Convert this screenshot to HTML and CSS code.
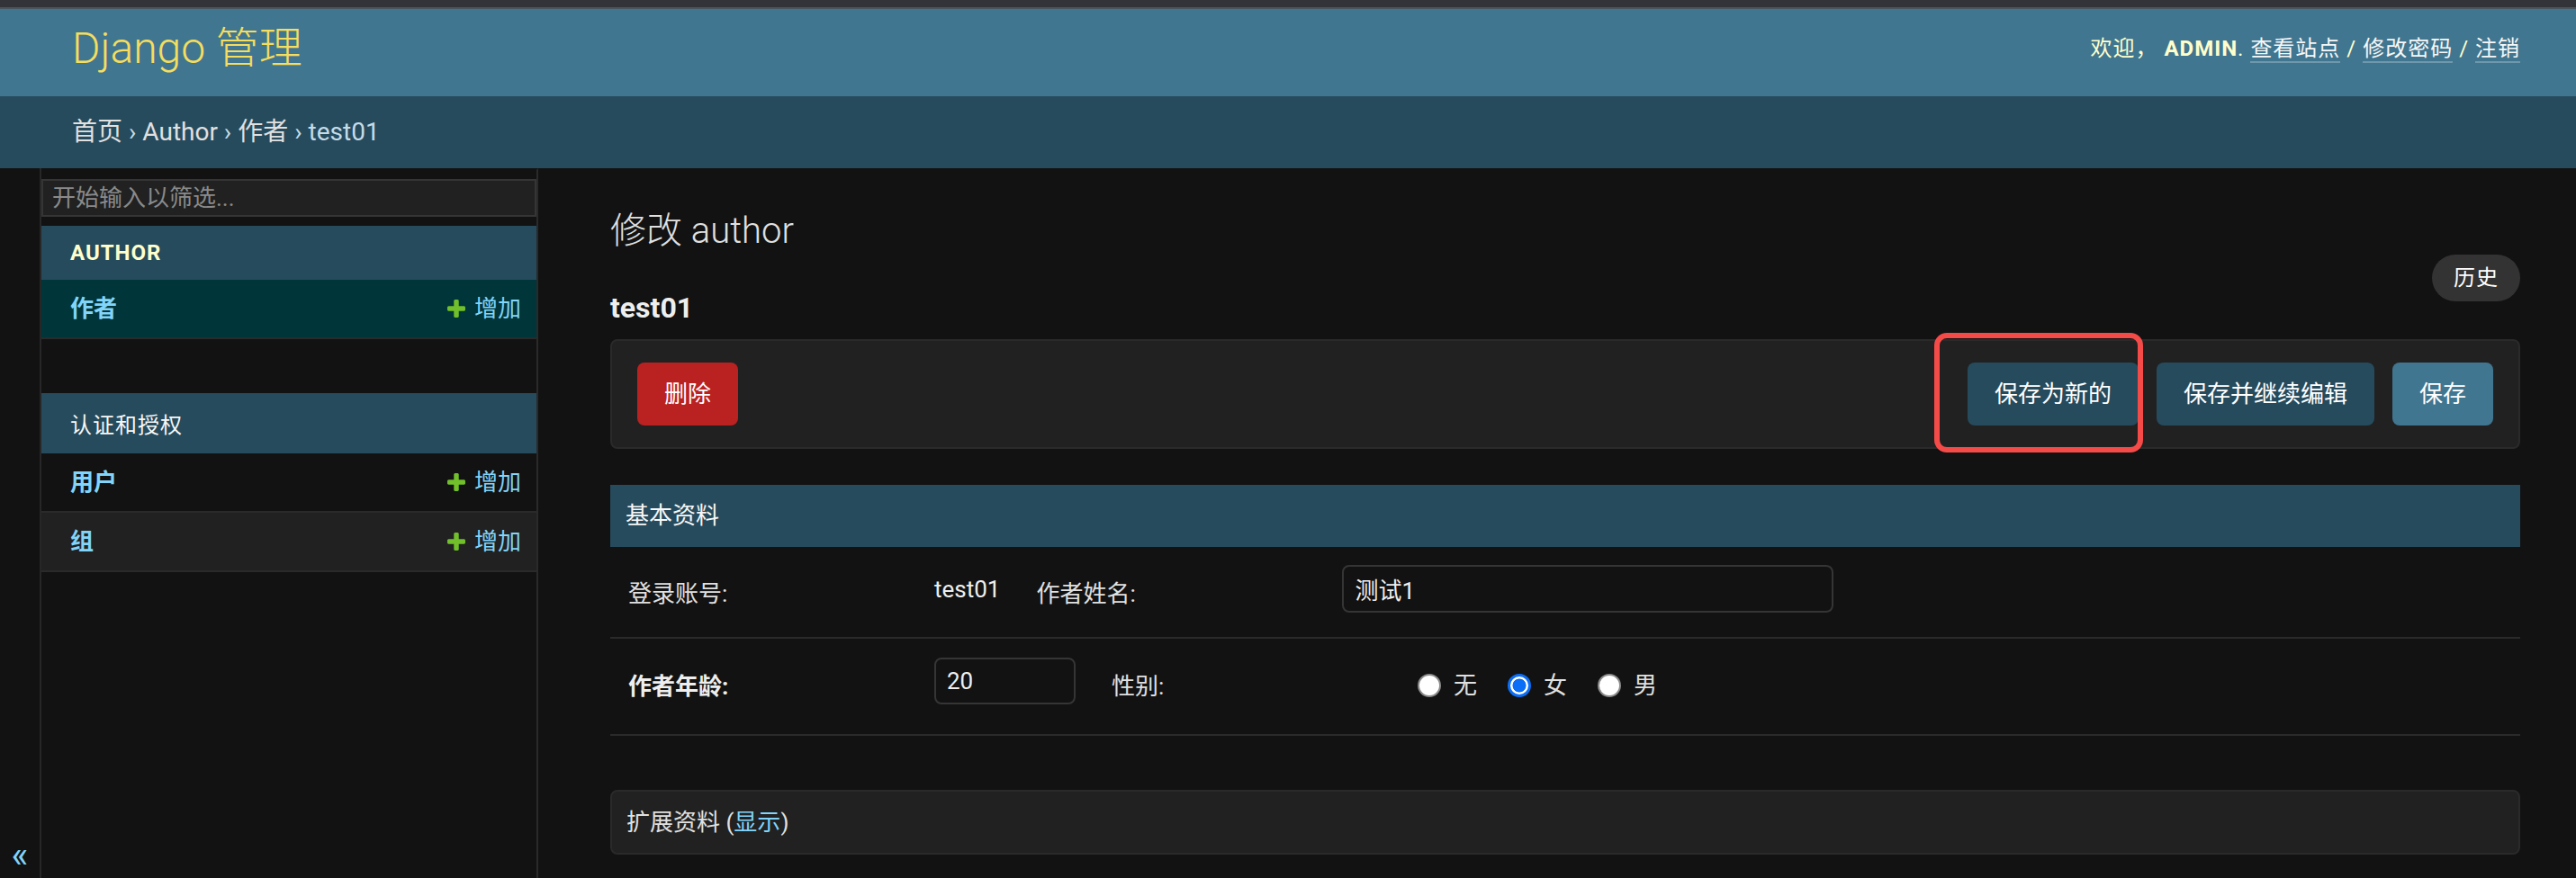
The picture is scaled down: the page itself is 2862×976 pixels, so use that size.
FILE: index.html
```html
<!DOCTYPE html>
<html lang="zh-Hans">
<head>
  <meta charset="UTF-8">
  <meta name="viewport" content="width=device-width, initial-scale=1.0">
  <title>修改 author | Django 站点管理员</title>
  <link rel="stylesheet" href="styles.css">
</head>
<body>
  <div class="window-edge"></div>

  <header class="header">
    <div class="branding"><a href="#">Django 管理</a></div>
    <div class="user-tools">
      欢迎， <strong>admin</strong>. <a href="#">查看站点</a> / <a href="#">修改密码</a> / <a href="#">注销</a>
    </div>
  </header>

  <nav class="breadcrumbs">
    <a href="#">首页</a> › <a href="#">Author</a> › <a href="#">作者</a> › test01
  </nav>

  <div class="main">
    <div class="toggle-nav"><span>«</span></div>

    <aside class="sidebar">
      <input type="search" class="nav-filter" placeholder="开始输入以筛选...">

      <div class="app-module current-app">
        <div class="app-caption"><a href="#">Author</a></div>
        <div class="model-row current-model">
          <a class="model-link" href="#">作者</a>
          <a class="addlink" href="#">
            <svg viewBox="192 128 1408 1408"><path fill="#70bf2b" d="M1600 736v192q0 40-28 68t-68 28h-416v416q0 40-28 68t-68 28h-192q-40 0-68-28t-28-68v-416h-416q-40 0-68-28t-28-68v-192q0-40 28-68t68-28h416v-416q0-40 28-68t68-28h192q40 0 68 28t28 68v416h416q40 0 68 28t28 68z"/></svg>
            增加
          </a>
        </div>
      </div>

      <div class="app-module">
        <div class="app-caption"><a href="#">认证和授权</a></div>
        <div class="model-row">
          <a class="model-link" href="#">用户</a>
          <a class="addlink" href="#">
            <svg viewBox="192 128 1408 1408"><path fill="#70bf2b" d="M1600 736v192q0 40-28 68t-68 28h-416v416q0 40-28 68t-68 28h-192q-40 0-68-28t-28-68v-416h-416q-40 0-68-28t-28-68v-192q0-40 28-68t68-28h416v-416q0-40 28-68t68-28h192q40 0 68 28t28 68v416h416q40 0 68 28t28 68z"/></svg>
            增加
          </a>
        </div>
        <div class="model-row hovered">
          <a class="model-link" href="#">组</a>
          <a class="addlink" href="#">
            <svg viewBox="192 128 1408 1408"><path fill="#70bf2b" d="M1600 736v192q0 40-28 68t-68 28h-416v416q0 40-28 68t-68 28h-192q-40 0-68-28t-28-68v-416h-416q-40 0-68-28t-28-68v-192q0-40 28-68t68-28h416v-416q0-40 28-68t68-28h192q40 0 68 28t28 68v416h416q40 0 68 28t28 68z"/></svg>
            增加
          </a>
        </div>
      </div>
    </aside>

    <main class="content">
      <h1>修改 author</h1>
      <div class="title-row">
        <h2>test01</h2>
        <a class="history-link" href="#">历史</a>
      </div>

      <form>
        <div class="submit-row">
          <a class="btn btn-delete" href="#">删除</a>
          <span class="marked">
            <button type="button" class="btn">保存为新的</button>
            <span class="highlight"></span>
          </span>
          <button type="button" class="btn">保存并继续编辑</button>
          <button type="button" class="btn btn-default">保存</button>
        </div>

        <fieldset class="fieldset">
          <h2>基本资料</h2>
          <div class="form-row">
            <div class="field-box">
              <label class="field-label">登录账号:</label>
              <div class="readonly">test01</div>
            </div>
            <div class="field-box">
              <label class="field-label">作者姓名:</label>
              <input type="text" class="text-input" value="测试1">
            </div>
          </div>
          <div class="form-row form-row-radio">
            <div class="field-box">
              <label class="field-label required">作者年龄:</label>
              <input type="text" class="text-input text-input-small" value="20">
            </div>
            <div class="field-box">
              <label class="field-label">性别:</label>
              <ul class="radio-list">
                <li><label><input type="radio" name="gender"> 无</label></li>
                <li><label><input type="radio" name="gender" checked> 女</label></li>
                <li><label><input type="radio" name="gender"> 男</label></li>
              </ul>
            </div>
          </div>
        </fieldset>

        <div class="fieldset-collapsed">
          扩展资料 (<a href="#">显示</a>)
        </div>
      </form>
    </main>
  </div>
</body>
</html>
```

FILE: styles.css
```css
* {
  box-sizing: border-box;
}
html, body {
  height: 100%;
}
body {
  margin: 0;
  display: flex;
  flex-direction: column;
  overflow: hidden;
  background: #121212;
  color: #eeeeee;
  font-family: Roboto, "Noto Sans CJK SC", sans-serif;
  font-size: 26px;
}
a {
  color: #81d4fa;
  text-decoration: none;
}

/* top of the window */
.window-edge {
  flex: none;
  height: 10px;
  background: #333438;
  border-bottom: 2px solid #4a555d;
}

/* header */
.header {
  flex: none;
  height: 97px;
  padding: 0 62px 9px 80px;
  display: flex;
  align-items: center;
  justify-content: space-between;
  background: #417690;
}
.branding a {
  color: #f5dd5d;
  font-size: 48px;
  font-weight: 300;
  line-height: 56px;
}
.user-tools {
  color: #ffffcc;
  font-size: 24px;
  line-height: 32px;
  letter-spacing: 1px;
}
.user-tools strong {
  text-transform: uppercase;
}
.user-tools a {
  color: #f7f7f7;
  border-bottom: 2px solid rgba(255, 255, 255, 0.25);
}

.breadcrumbs {
  flex: none;
  height: 80px;
  padding: 0 62px 0 80px;
  line-height: 80px;
  background: #264b5d;
  color: #c4dce8;
  font-size: 28px;
}
.breadcrumbs a {
  color: #e0e0e0;
}

/* main area */
.main {
  flex: 1;
  display: flex;
  min-height: 0;
}
.toggle-nav {
  flex: 0 0 46px;
  padding-top: 752px;
  border-right: 2px solid #272727;
  color: #81d4fa;
  font-size: 40px;
  line-height: 24px;
  text-align: center;
}

/* sidebar */
.sidebar {
  flex: 0 0 552px;
  border-top: 2px solid transparent;
  border-right: 2px solid #2a2a2a;
}
.nav-filter {
  display: block;
  width: 100%;
  height: 42px;
  margin: 10px 0;
  padding: 0 10px;
  border: 2px solid #353535;
  background: #212121;
  color: #eeeeee;
  font: inherit;
  font-size: 26px;
}
.nav-filter::placeholder {
  color: #8a8a8a;
}
.app-module {
  margin-bottom: 60px;
}
.app-caption {
  padding: 16px 32px;
  background: #264b5d;
  font-size: 24px;
  letter-spacing: 1px;
}
.app-caption a {
  color: #f7f7f7;
}
.current-app .app-caption a {
  color: #ffffcc;
  font-weight: bold;
  text-transform: uppercase;
}
.model-row {
  height: 66px;
  padding: 0 17px 0 32px;
  display: flex;
  align-items: center;
  justify-content: space-between;
  border-bottom: 2px solid #2a2a2a;
  line-height: 32px;
}
.model-row.current-model {
  background: #00363a;
}
.model-row.hovered {
  background: #212121;
}
.model-link {
  font-weight: bold;
}
.addlink {
  display: flex;
  align-items: center;
  gap: 10px;
}
.addlink svg {
  width: 20px;
  height: 20px;
}

/* content */
.content {
  flex: 1;
  min-width: 0;
  padding: 40px 62px 0 80px;
}
.content h1 {
  margin: 6px 0 0;
  color: #e0e0e0;
  font-size: 40px;
  font-weight: 300;
  line-height: 48px;
}
.title-row {
  margin-top: 2px;
  display: flex;
  align-items: flex-start;
  justify-content: space-between;
}
.title-row h2 {
  margin: 39px 0 0;
  font-size: 32px;
  line-height: 40px;
}
.history-link {
  height: 52px;
  padding: 0 24px;
  border-radius: 26px;
  background: #333333;
  color: #ffffff;
  font-size: 24px;
  line-height: 52px;
  letter-spacing: 1px;
}

.submit-row {
  margin-top: 15px;
  padding: 24px 28px;
  display: flex;
  align-items: center;
  gap: 20px;
  background: #212121;
  border: 2px solid #2a2a2a;
  border-radius: 8px;
}
.btn {
  display: block;
  height: 70px;
  padding: 0 30px;
  border: none;
  border-radius: 8px;
  background: #264b5d;
  color: #ffffff;
  font: inherit;
  font-size: 26px;
  line-height: 70px;
}
.btn-delete {
  margin-right: auto;
  background: #ba2121;
}
.btn-default {
  background: #417690;
}
.marked {
  position: relative;
}
.highlight {
  position: absolute;
  left: -37px;
  top: -33px;
  right: -5px;
  bottom: -30px;
  border: 6px solid #f44b49;
  border-radius: 14px;
}

/* fieldsets */
.fieldset {
  margin: 40px 0 0;
  padding: 0;
  border: none;
}
.fieldset h2 {
  margin: 0;
  height: 69px;
  padding: 0 17px;
  background: #264b5d;
  color: #f7f7f7;
  font-size: 26px;
  font-weight: normal;
  line-height: 69px;
}
.form-row {
  padding: 20px 20px 27px;
  display: flex;
  align-items: flex-start;
  border-bottom: 2px solid #2a2a2a;
}
.form-row-radio {
  padding-top: 21px;
  padding-bottom: 33px;
}
.field-box {
  margin-right: 40px;
  display: flex;
  align-items: flex-start;
}
.field-label {
  width: 340px;
  padding: 16px 20px 0 0;
  color: #e0e0e0;
  line-height: 32px;
}
.field-label.required {
  color: #eeeeee;
  font-weight: bold;
}
.readonly {
  padding-top: 11px;
  line-height: 32px;
}
.text-input {
  width: 546px;
  height: 53px;
  padding: 0 12px;
  border: 2px solid #353535;
  border-radius: 8px;
  background: #121212;
  color: #eeeeee;
  font: inherit;
  font-size: 26px;
}
.text-input-small {
  width: 157px;
  height: 52px;
}
.radio-list {
  margin: 0;
  padding: 18px 0 0;
  list-style: none;
  display: flex;
  gap: 34px;
}
.radio-list label {
  display: flex;
  align-items: center;
  gap: 14px;
  color: #e0e0e0;
  line-height: 26px;
}
.radio-list input {
  appearance: none;
  width: 26px;
  height: 26px;
  margin: 0;
  border: 2px solid #8a8a8a;
  border-radius: 50%;
  background: #ffffff;
}
.radio-list input:checked {
  border: 3px solid #0b6ef6;
  background: radial-gradient(circle closest-side, #0b6ef6 72%, #ffffff 78%);
}

.fieldset-collapsed {
  margin-top: 60px;
  height: 72px;
  padding: 0 16px;
  border: 2px solid #2a2a2a;
  border-radius: 8px;
  background: #212121;
  color: #e0e0e0;
  line-height: 68px;
}
```
